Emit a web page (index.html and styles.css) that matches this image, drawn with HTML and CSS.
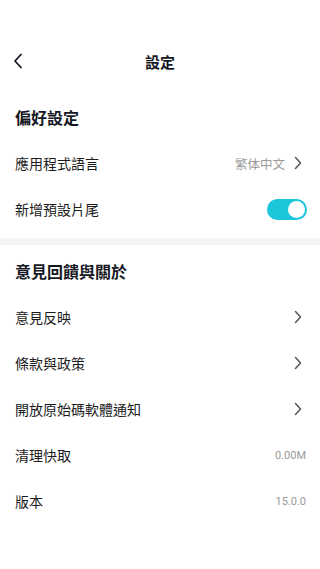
FILE: index.html
```html
<!DOCTYPE html>
<html lang="zh-Hant">
<head>
    <meta charset="UTF-8">
    <meta name="viewport" content="width=device-width, initial-scale=1.0">
    <title>設定</title>
    <link rel="stylesheet" href="styles.css">
</head>
<body>
    <header class="topbar">
        <span class="back">
            <svg width="10" height="16" viewBox="0 0 10 16"><path d="M8 1.5 L2 8 L8 14.5" fill="none" stroke="#161823" stroke-width="1.8" stroke-linecap="round" stroke-linejoin="round"/></svg>
        </span>
        <h1>設定</h1>
    </header>

    <!-- Preferences -->
    <section class="group first">
        <h2 class="group-title">偏好設定</h2>
        <div class="row">
            <span class="label">應用程式語言</span>
            <span class="right">
                <span class="value">繁体中文</span>
                <svg class="chev" width="8" height="14" viewBox="0 0 8 14"><path d="M1.5 1.5 L6.5 7 L1.5 12.5" fill="none" stroke="#555" stroke-width="1.5" stroke-linecap="round" stroke-linejoin="round"/></svg>
            </span>
        </div>
        <div class="row">
            <span class="label">新增預設片尾</span>
            <span class="toggle on"><span class="knob"></span></span>
        </div>
    </section>

    <div class="divider"></div>

    <!-- Feedback and about -->
    <section class="group">
        <h2 class="group-title">意見回饋與關於</h2>
        <div class="row">
            <span class="label">意見反映</span>
            <svg class="chev" width="8" height="14" viewBox="0 0 8 14"><path d="M1.5 1.5 L6.5 7 L1.5 12.5" fill="none" stroke="#555" stroke-width="1.5" stroke-linecap="round" stroke-linejoin="round"/></svg>
        </div>
        <div class="row">
            <span class="label">條款與政策</span>
            <svg class="chev" width="8" height="14" viewBox="0 0 8 14"><path d="M1.5 1.5 L6.5 7 L1.5 12.5" fill="none" stroke="#555" stroke-width="1.5" stroke-linecap="round" stroke-linejoin="round"/></svg>
        </div>
        <div class="row">
            <span class="label">開放原始碼軟體通知</span>
            <svg class="chev" width="8" height="14" viewBox="0 0 8 14"><path d="M1.5 1.5 L6.5 7 L1.5 12.5" fill="none" stroke="#555" stroke-width="1.5" stroke-linecap="round" stroke-linejoin="round"/></svg>
        </div>
        <div class="row">
            <span class="label">清理快取</span>
            <span class="num">0.00M</span>
        </div>
        <div class="row">
            <span class="label">版本</span>
            <span class="num">15.0.0</span>
        </div>
    </section>
</body>
</html>
```

FILE: styles.css
```css
body {
    margin: 0;
    padding: 39px 0 0 0;
    background-color: #fff;
    font-family: "Noto Sans CJK TC", "Noto Sans", sans-serif;
    color: #161823;
}
.topbar {
    height: 44px;
    display: flex;
    align-items: center;
    justify-content: center;
    position: relative;
}
.topbar h1 {
    margin: 0;
    font-size: 15px;
    font-weight: 700;
}
.back {
    position: absolute;
    left: 13px;
    top: 14px;
    display: flex;
}
.group {
    padding: 3px 0 0 0;
}
.group.first {
    padding: 11px 0 6px 0;
}
.group-title {
    margin: 0;
    height: 46px;
    line-height: 46px;
    padding-left: 15px;
    font-size: 16px;
    font-weight: 700;
}
.row {
    height: 46px;
    display: flex;
    align-items: center;
    justify-content: space-between;
    padding: 0 14px 0 15px;
}
.label {
    font-size: 14px;
    color: #1c1c1c;
}
.right {
    display: flex;
    align-items: center;
    gap: 9px;
}
.value {
    font-size: 12.5px;
    color: #9a9a9a;
}
.chev {
    margin-right: 4px;
}
.num {
    font-family: Roboto, "Noto Sans", sans-serif;
    font-size: 11px;
    color: #9a9a9a;
}
.toggle {
    width: 40px;
    height: 21px;
    border-radius: 11px;
    background-color: #ddd;
    position: relative;
    margin-right: -1px;
}
.toggle.on {
    background-color: #1bc6da;
}
.knob {
    position: absolute;
    top: 2px;
    right: 2px;
    width: 17px;
    height: 17px;
    border-radius: 50%;
    background-color: #fff;
}
.divider {
    height: 7px;
    background-color: #f4f4f6;
}
```
